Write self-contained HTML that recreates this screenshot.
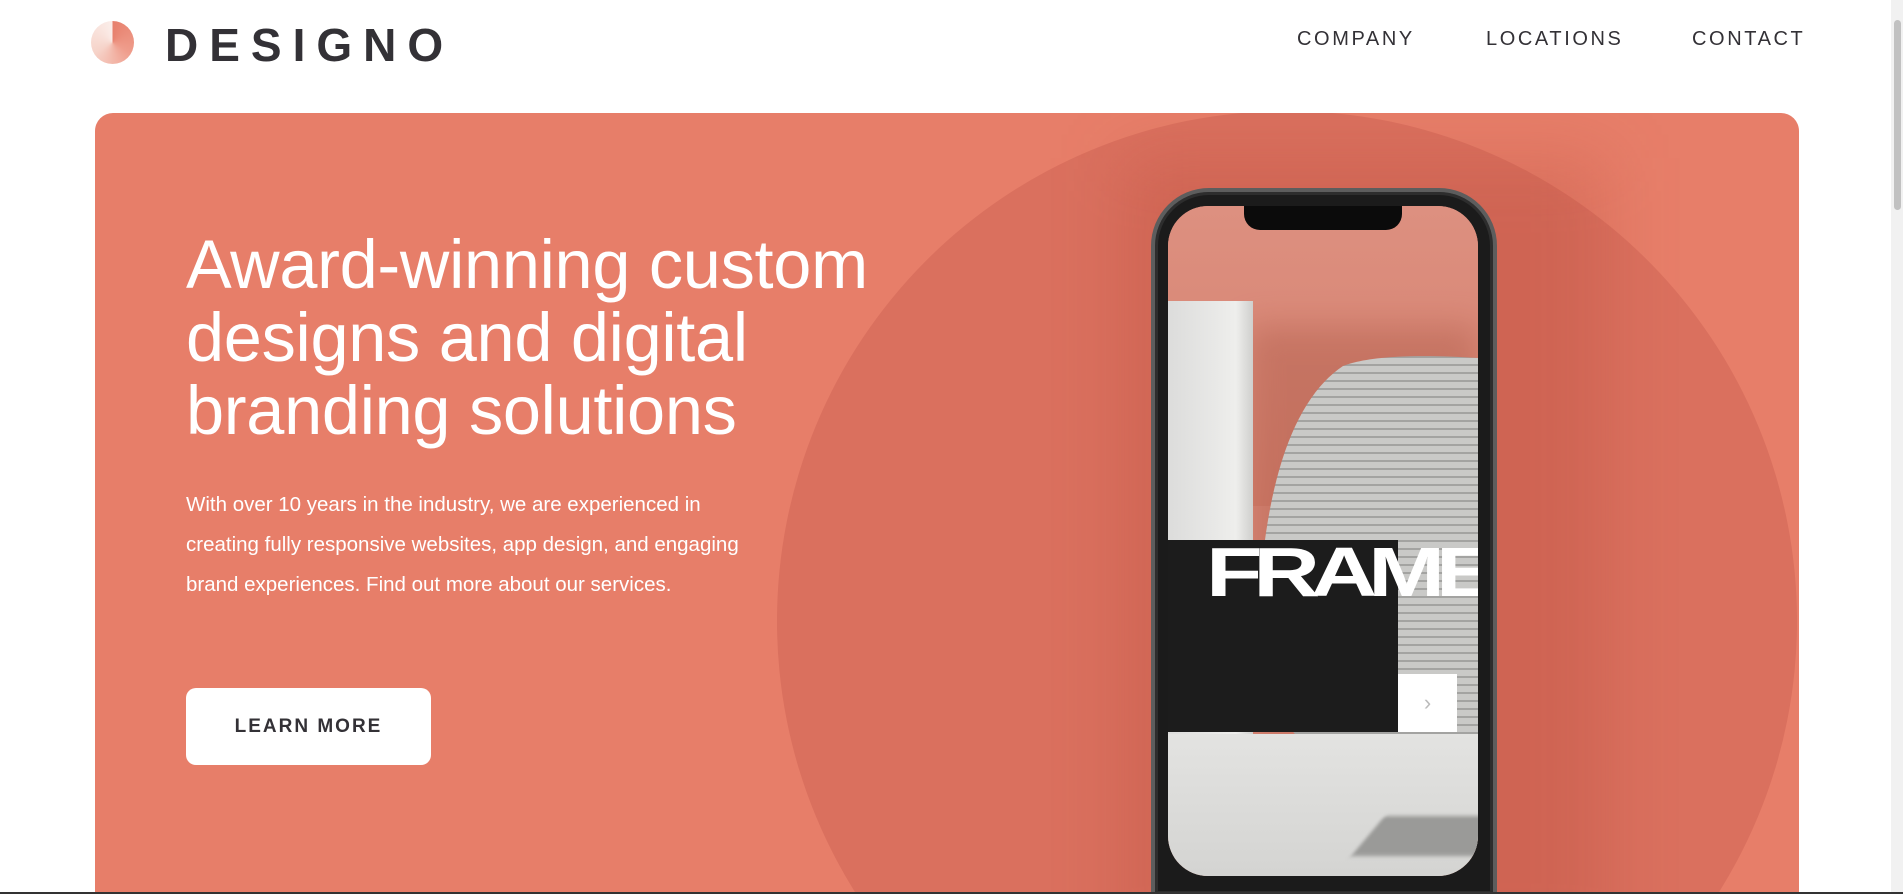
<!DOCTYPE html>
<html><head><meta charset="utf-8"><style>
*{margin:0;padding:0;box-sizing:border-box}
html,body{width:1903px;height:894px;overflow:hidden;background:#fff;font-family:"Liberation Sans",sans-serif}
#wrap{position:relative;width:1903px;height:894px;overflow:hidden}
.logo{position:absolute;left:91px;top:21px;width:43px;height:43px;border-radius:50%;background:conic-gradient(#e7806d 0deg,#ef9d8c 120deg,#f6d3c9 240deg,#fbeeea 360deg)}
.brand{position:absolute;left:165px;top:18px;font-size:46px;font-weight:bold;letter-spacing:11px;color:#333136}
.nav{position:absolute;top:28px;font-size:20px;letter-spacing:2.6px;color:#333136}
.hero{position:absolute;left:95px;top:113px;width:1704px;height:781px;border-radius:18px 18px 0 0;background:#e77e69;overflow:hidden}
.circ{position:absolute;left:682px;top:-2px;width:1020px;height:1020px;border-radius:50%;background:#da705e}
.shadow{position:absolute;left:1030px;top:45px;width:480px;height:800px;background:rgba(170,60,45,.22);filter:blur(35px)}
h1{position:absolute;left:91px;top:115px;font-size:68.5px;font-weight:normal;line-height:73px;color:#fff;letter-spacing:-0.3px}
p{position:absolute;left:91px;top:372px;width:590px;font-size:20.5px;line-height:40px;color:#fff}
.btn{position:absolute;left:91px;top:575px;width:245px;height:77px;border-radius:10px;background:#fff;color:#333136;font-size:19px;font-weight:bold;letter-spacing:2px;text-align:center;line-height:77px}
.phone{position:absolute;left:1151px;top:188px;width:346px;height:706px;border-radius:58px 58px 0 0;background:#1b1b1b;border:4px solid #5d5d5d;border-bottom:none;box-shadow:inset 0 0 0 3px #2d2d2d}
.screen{position:absolute;left:1168px;top:206px;width:310px;height:670px;border-radius:40px;overflow:hidden;background:#dc8b7b}
.notch{position:absolute;left:76px;top:0;width:158px;height:24px;background:#0b0b0b;border-radius:0 0 16px 16px}
</style></head><body><div id="wrap">
<div class="logo"></div>
<div class="brand">DESIGNO</div>
<div class="nav" style="left:1297px">COMPANY</div>
<div class="nav" style="left:1486px">LOCATIONS</div>
<div class="nav" style="left:1692px">CONTACT</div>
<div class="hero">
 <div class="circ"></div>
 <div class="shadow"></div>
 <h1>Award-winning custom<br>designs and digital<br>branding solutions</h1>
 <p>With over 10 years in the industry, we are experienced in creating fully responsive websites, app design, and engaging brand experiences. Find out more about our services.</p>
 <div class="btn">LEARN MORE</div>
</div>
<div class="phone"></div>
<div class="screen">
 <div style="position:absolute;left:0;top:0;width:310px;height:300px;background:linear-gradient(180deg,#dd9080,#d47f6d)"></div>
 <div style="position:absolute;left:80px;top:120px;width:230px;height:420px;background:#b4614f;filter:blur(16px);opacity:.5"></div>
 <svg style="position:absolute;left:0;top:0" width="310" height="670">
  <defs><pattern id="st" width="10" height="8" patternUnits="userSpaceOnUse"><rect width="10" height="8" fill="#c9c9c7"/><rect y="6" width="10" height="2" fill="#a3a3a1"/></pattern></defs>
  <path d="M95,350 C105,260 130,190 175,160 C200,150 250,148 310,152 L310,540 L140,540 C110,520 95,470 95,350 Z" fill="url(#st)"/>
 </svg>
 <div style="position:absolute;left:0;top:95px;width:85px;height:440px;background:linear-gradient(90deg,#dcdcdb,#eeeeec 80%,#cfcfcd)"></div>
 <div style="position:absolute;left:0;top:528px;width:310px;height:150px;background:linear-gradient(180deg,#e3e3e1,#d3d3d1)"></div>
 <div style="position:absolute;left:0;top:334px;width:230px;height:192px;background:#1c1c1c"></div>
 <div style="position:absolute;left:38px;top:326px;font-size:70px;font-weight:bold;color:#fff;letter-spacing:-7px;line-height:80px;transform:scaleX(1.32);transform-origin:left">FRAME</div>
 <div style="position:absolute;left:230px;top:468px;width:59px;height:58px;background:#fff;color:#bbb;font-size:22px;text-align:center;line-height:58px">&#8250;</div>
 <div style="position:absolute;left:200px;top:610px;width:130px;height:40px;background:#9a9a98;transform:skewX(-40deg);filter:blur(2px)"></div>
 <div class="notch"></div>
</div>
<div style="position:absolute;left:1891px;top:0;width:12px;height:894px;background:#f1f1f1"></div>
<div style="position:absolute;left:1894px;top:20px;width:7px;height:190px;background:#c1c1c1;border-radius:4px"></div>
<div style="position:absolute;left:0;top:892px;width:1903px;height:2px;background:#333"></div>
</div></body></html>
